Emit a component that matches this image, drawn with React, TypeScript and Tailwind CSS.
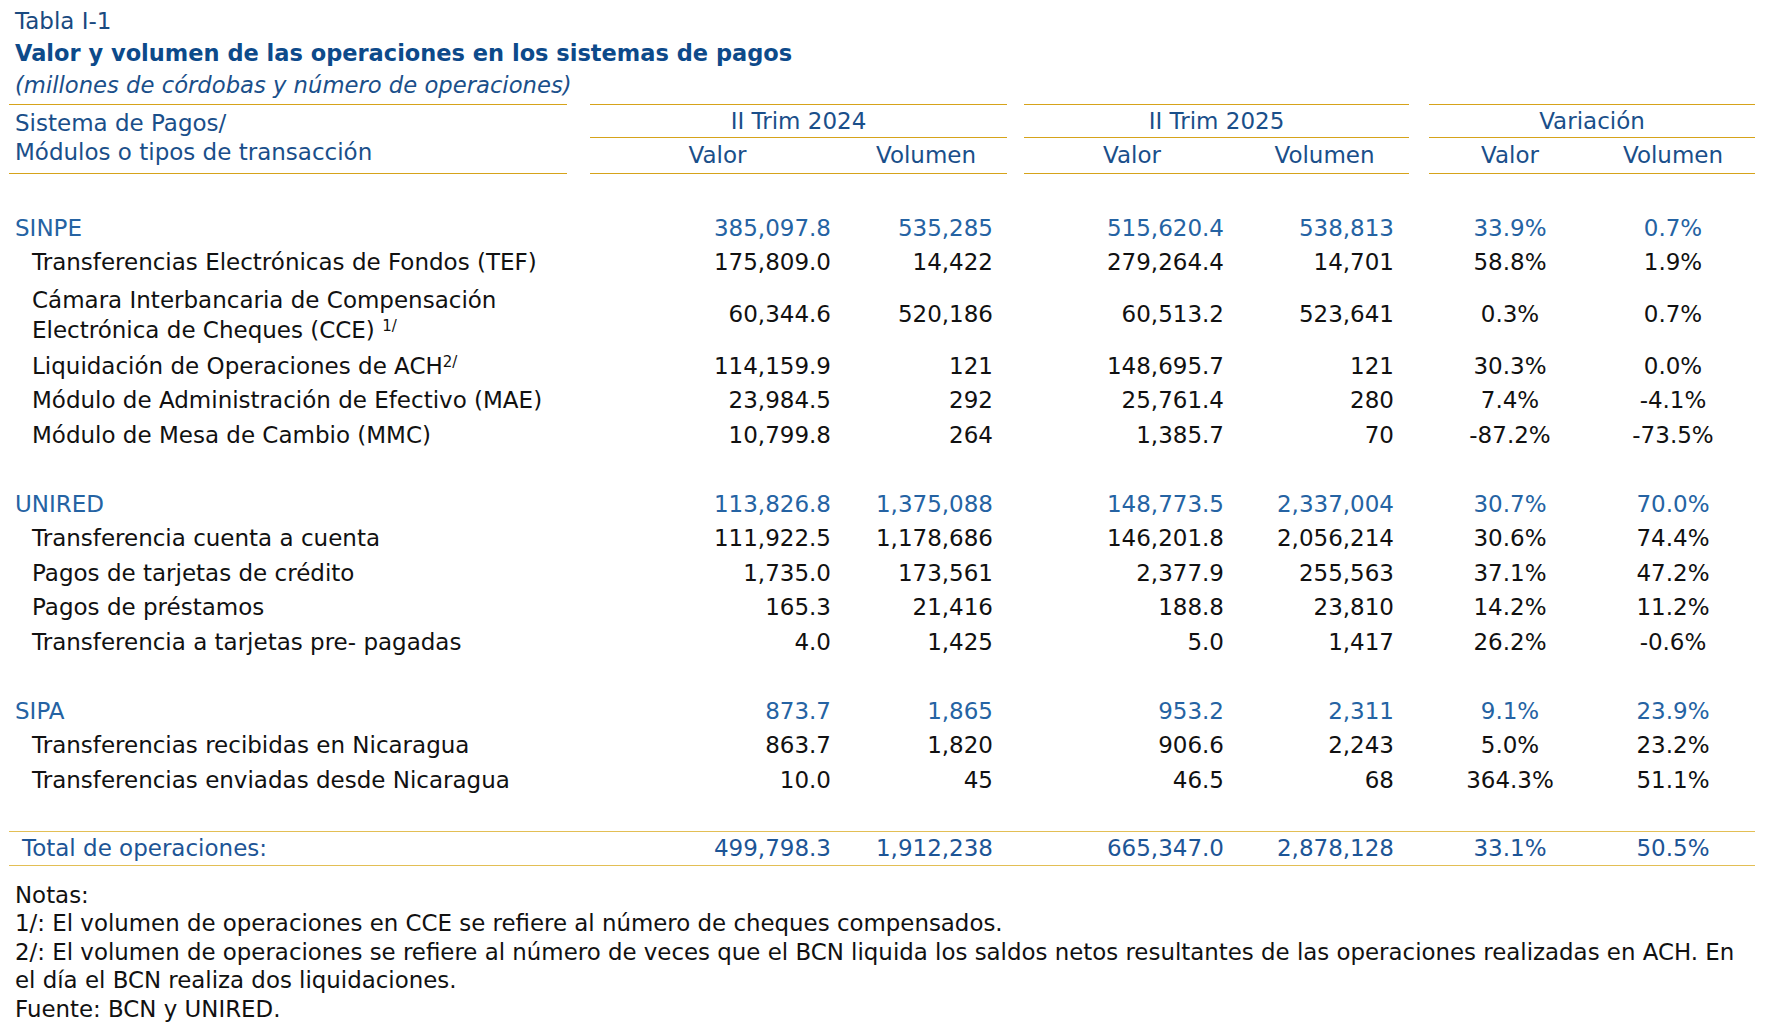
import React from "react";

type Kind = "group" | "item" | "total";

const FONT = { fontFamily: '"DejaVu Sans", Verdana, sans-serif' };

function Cells({ vals, kind }: { vals: string[]; kind: Kind }) {
  const color = kind === "item" ? "text-[#111111]" : kind === "total" ? "text-[#1d5596]" : "text-[#2563a3]";
  return (
    <>
      <div className={`ml-[23px] w-[255px] shrink-0 pr-[14px] text-right ${color}`}>{vals[0]}</div>
      <div className={`w-[162px] shrink-0 pr-[14px] text-right ${color}`}>{vals[1]}</div>
      <div className={`ml-[17px] w-[216px] shrink-0 pr-[16px] text-right ${color}`}>{vals[2]}</div>
      <div className={`w-[169px] shrink-0 pr-[15px] text-right ${color}`}>{vals[3]}</div>
      <div className={`ml-[20px] w-[162px] shrink-0 text-center ${color}`}>{vals[4]}</div>
      <div className={`w-[164px] shrink-0 text-center ${color}`}>{vals[5]}</div>
    </>
  );
}

function Row({ label, vals, kind }: { label: React.ReactNode; vals: string[]; kind: Kind }) {
  const labelCls =
    kind === "group"
      ? "pl-[6px] text-[#2563a3]"
      : kind === "total"
      ? "pl-[13px] text-[#1d5596]"
      : "pl-[23px] text-[#111111]";
  return (
    <div className="flex h-[34.5px] items-center">
      <div className={`w-[558px] shrink-0 whitespace-nowrap ${labelCls}`}>{label}</div>
      <Cells vals={vals} kind={kind} />
    </div>
  );
}

function Spacer() {
  return <div className="h-[34.5px]" />;
}

export default function App() {
  return (
    <div className="min-h-[1033px] w-[1769px] bg-white pl-[9px] pt-[5px] text-[23px] leading-none" style={FONT}>
      {/* Title block */}
      <div className="pl-[6px]">
        <div className="flex h-[32px] items-center text-[#1a4a80]">Tabla I-1</div>
        <div className="flex h-[33px] items-center text-[22.5px] font-bold text-[#0d4a8a]">
          Valor y volumen de las operaciones en los sistemas de pagos
        </div>
        <div className="flex h-[31px] items-center text-[22.7px] italic text-[#1a4f8a]">
          (millones de córdobas y número de operaciones)
        </div>
      </div>

      {/* Header */}
      <div className="mt-[3px] flex text-[#1a4f8a]">
        <div className="h-[70px] w-[558px] shrink-0 border-y-[1.5px] border-[#d6a31a] pl-[6px] pt-[4px] leading-[29px]">
          <div>Sistema de Pagos/</div>
          <div>Módulos o tipos de transacción</div>
        </div>
        <div className="ml-[23px] flex w-[417px] shrink-0 flex-col border-y-[1.5px] border-[#d6a31a]">
          <div className="flex h-[33px] items-center justify-center border-b-[1.5px] border-[#d6a31a]">II Trim 2024</div>
          <div className="flex flex-1 items-center">
            <div className="w-[255px] text-center">Valor</div>
            <div className="w-[162px] text-center">Volumen</div>
          </div>
        </div>
        <div className="ml-[17px] flex w-[385px] shrink-0 flex-col border-y-[1.5px] border-[#d6a31a]">
          <div className="flex h-[33px] items-center justify-center border-b-[1.5px] border-[#d6a31a]">II Trim 2025</div>
          <div className="flex flex-1 items-center">
            <div className="w-[216px] text-center">Valor</div>
            <div className="w-[169px] text-center">Volumen</div>
          </div>
        </div>
        <div className="ml-[20px] flex w-[326px] shrink-0 flex-col border-y-[1.5px] border-[#d6a31a]">
          <div className="flex h-[33px] items-center justify-center border-b-[1.5px] border-[#d6a31a]">Variación</div>
          <div className="flex flex-1 items-center">
            <div className="w-[162px] text-center">Valor</div>
            <div className="w-[164px] text-center">Volumen</div>
          </div>
        </div>
      </div>

      {/* Body */}
      <div className="h-[37px]" />
      <Row kind="group" label="SINPE" vals={["385,097.8", "535,285", "515,620.4", "538,813", "33.9%", "0.7%"]} />
      <Row kind="item" label="Transferencias Electrónicas de Fondos (TEF)" vals={["175,809.0", "14,422", "279,264.4", "14,701", "58.8%", "1.9%"]} />
      <div className="flex h-[69px] items-center">
        <div className="w-[558px] shrink-0 whitespace-nowrap pl-[23px] leading-[30px] text-[#111111]">
          <div>Cámara Interbancaria de Compensación</div>
          <div>
            Electrónica de Cheques (CCE) <sup className="relative -top-[7px] text-[15px]">1/</sup>
          </div>
        </div>
        <Cells kind="item" vals={["60,344.6", "520,186", "60,513.2", "523,641", "0.3%", "0.7%"]} />
      </div>
      <Row
        kind="item"
        label={
          <>
            Liquidación de Operaciones de ACH<sup className="relative -top-[7px] text-[15px]">2/</sup>
          </>
        }
        vals={["114,159.9", "121", "148,695.7", "121", "30.3%", "0.0%"]}
      />
      <Row kind="item" label="Módulo de Administración de Efectivo (MAE)" vals={["23,984.5", "292", "25,761.4", "280", "7.4%", "-4.1%"]} />
      <Row kind="item" label="Módulo de Mesa de Cambio (MMC)" vals={["10,799.8", "264", "1,385.7", "70", "-87.2%", "-73.5%"]} />
      <Spacer />
      <Row kind="group" label="UNIRED" vals={["113,826.8", "1,375,088", "148,773.5", "2,337,004", "30.7%", "70.0%"]} />
      <Row kind="item" label="Transferencia cuenta a cuenta" vals={["111,922.5", "1,178,686", "146,201.8", "2,056,214", "30.6%", "74.4%"]} />
      <Row kind="item" label="Pagos de tarjetas de crédito" vals={["1,735.0", "173,561", "2,377.9", "255,563", "37.1%", "47.2%"]} />
      <Row kind="item" label="Pagos de préstamos" vals={["165.3", "21,416", "188.8", "23,810", "14.2%", "11.2%"]} />
      <Row kind="item" label="Transferencia a tarjetas pre- pagadas" vals={["4.0", "1,425", "5.0", "1,417", "26.2%", "-0.6%"]} />
      <Spacer />
      <Row kind="group" label="SIPA" vals={["873.7", "1,865", "953.2", "2,311", "9.1%", "23.9%"]} />
      <Row kind="item" label="Transferencias recibidas en Nicaragua" vals={["863.7", "1,820", "906.6", "2,243", "5.0%", "23.2%"]} />
      <Row kind="item" label="Transferencias enviadas desde Nicaragua" vals={["10.0", "45", "46.5", "68", "364.3%", "51.1%"]} />
      <div className="h-[33px]" />

      {/* Total */}
      <div className="w-[1746px] border-y-[1.5px] border-[#e3bf55]">
        <div className="flex h-[33px] items-center">
          <div className="w-[558px] shrink-0 whitespace-nowrap pl-[13px] text-[#1d5596]">Total de operaciones:</div>
          <Cells kind="total" vals={["499,798.3", "1,912,238", "665,347.0", "2,878,128", "33.1%", "50.5%"]} />
        </div>
      </div>

      {/* Notes */}
      <div className="mt-[15px] pl-[6px] text-[22.9px] leading-[28.5px] text-[#111111]">
        <div className="whitespace-nowrap">Notas:</div>
        <div className="whitespace-nowrap">1/: El volumen de operaciones en CCE se refiere al número de cheques compensados.</div>
        <div className="whitespace-nowrap">
          2/: El volumen de operaciones se refiere al número de veces que el BCN liquida los saldos netos resultantes de las operaciones realizadas en ACH. En
        </div>
        <div className="whitespace-nowrap">el día el BCN realiza dos liquidaciones.</div>
        <div className="whitespace-nowrap">Fuente: BCN y UNIRED.</div>
      </div>
    </div>
  );
}
